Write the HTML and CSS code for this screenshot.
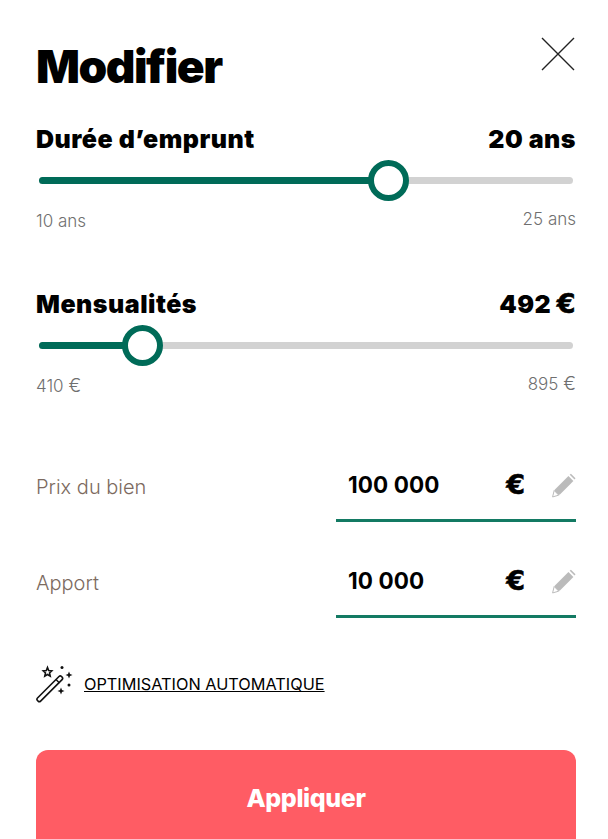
FILE: index.html
```html
<!DOCTYPE html>
<html lang="fr">
<head>
<meta charset="utf-8">
<title>Modifier</title>
<link rel="stylesheet" href="styles.css">
</head>
<body>
<main class="panel">
  <header class="head">
    <h1 class="title">Modifier</h1>
    <svg class="close" width="34" height="34" viewBox="0 0 34 34"><path d="M1 1L33 33M33 1L1 33" stroke="#222" stroke-width="1.4" fill="none"/></svg>
  </header>

  <section class="slider first">
    <div class="row"><span class="label">Durée d’emprunt</span><span class="label">20 ans</span></div>
    <div class="track"><div class="fill fill-a"></div><div class="thumb"></div></div>
    <div class="range"><span class="lo">10 ans</span><span>25 ans</span></div>
  </section>

  <section class="slider second">
    <div class="row"><span class="label">Mensualités</span><span class="label">492 <span class="label-euro">€</span></span></div>
    <div class="track"><div class="fill fill-b"></div><div class="thumb"></div></div>
    <div class="range"><span class="lo">410 <span class="range-euro">€</span></span><span>895 <span class="range-euro">€</span></span></div>
  </section>

  <div class="field field-a">
    <span class="field-label">Prix du bien</span>
    <div class="input">
      <span class="amount">100 000</span><span class="euro">€</span>
      <svg class="pencil" width="25" height="25" viewBox="0 0 25 25"><path d="M2 23.5L4 16.500L17.500 3L22.500 8L9 21.500Z" fill="#bbb"/><path d="M18.800 1.700L20 .6L24.600 5.200L23.600 6.400Z" fill="#bbb"/><path d="M3.200 17.500L7.800 22.200L1.600 24Z" fill="#fff" stroke="#bbb"/></svg>
    </div>
  </div>

  <div class="field field-b">
    <span class="field-label">Apport</span>
    <div class="input">
      <span class="amount">10 000</span><span class="euro">€</span>
      <svg class="pencil" width="25" height="25" viewBox="0 0 25 25"><path d="M2 23.500L4 16.500L17.500 3L22.500 8L9 21.500Z" fill="#bbb"/><path d="M18.800 1.700L20 .6L24.600 5.200L23.600 6.400Z" fill="#bbb"/><path d="M3.200 17.500L7.800 22.200L1.600 24Z" fill="#fff" stroke="#bbb"/></svg>
    </div>
  </div>

  <div class="auto">
    <svg width="38" height="38" viewBox="0 0 38 38"><path d="M2.500 33L24 11.500a1.800 1.800 0 0 1 2.500 0l.6.6a1.800 1.800 0 0 1 0 2.500L5.600 36.100a1.800 1.800 0 0 1-2.500 0l-.6-.6a1.800 1.800 0 0 1 0-2.500Z" fill="#fff" stroke="#111" stroke-width="1.600"/><path d="M21 14.500l3.500 3.500" stroke="#111" stroke-width="1.400"/><path d="M12.500 2.500l1.200 3 3.100.4-2.300 2.100.7 3.100-2.700-1.600-2.700 1.600.7-3.100-2.300-2.100 3.100-.4Z" fill="none" stroke="#111" stroke-width="1.600"/><circle cx="27" cy="2.500" r="1.500" fill="#111"/><path d="M34 6.500l1 2.500 2.500 1-2.500 1-1 2.500-1-2.500-2.500-1 2.500-1Z" fill="#111"/><circle cx="34" cy="20" r="1.500" fill="#111"/><path d="M26 22.500l1 2.500 2.500 1-2.500 1-1 2.500-1-2.500-2.500-1 2.500-1Z" fill="#111"/></svg>
    <a class="auto-link" href="#">OPTIMISATION AUTOMATIQUE</a>
  </div>

  <button class="apply" type="button">Appliquer</button>
</main>
</body>
</html>
```

FILE: styles.css
```css
* { box-sizing: border-box; }
html, body { margin: 0; height: 100%; background: #fff; overflow: hidden; }
body { font-family: "Inter", "Liberation Sans", sans-serif; color: #000; }
.panel { padding: 0 32px 0 36px; }
.head { display: flex; justify-content: space-between; align-items: flex-start; height: 88px; padding-top: 37px; }
.title { margin: 0; font-size: 46px; line-height: 58px; font-weight: 900; letter-spacing: -1.5px; }
.close { margin-right: 1px; }
.slider.first { margin-top: 38px; }
.slider.second { margin-top: 59px; }
.row { display: flex; justify-content: space-between; height: 26px; align-items: center; }
.label { font-size: 25px; line-height: 26px; font-weight: 900; letter-spacing: .5px; }
.label-euro { font-family: "DejaVu Sans", sans-serif; font-size: 27px; font-weight: 700; -webkit-text-stroke: .6px #000; }
.track { position: relative; height: 7px; margin: 25px 3px 0; border-radius: 4px; background: #d2d2d2; }
.fill { height: 7px; border-radius: 4px; background: #006b58; }
.fill-a { width: 65%; }
.fill-b { width: 19%; }
.thumb { position: absolute; top: -17px; width: 41px; height: 41px; border: 6px solid #006b58; border-radius: 50%; background: #fff; }
.fill-a + .thumb { left: 329px; }
.fill-b + .thumb { left: 83px; }
.range { display: flex; justify-content: space-between; margin-top: 24px; font-size: 17px; line-height: 22px; font-weight: 300; color: #6f6f6f; }
.range-euro { font-size: 19px; line-height: 20px; }
.lo { padding-top: 2px; }
.field { display: flex; justify-content: space-between; align-items: flex-start; height: 96px; }
.field-a { margin-top: 59px; }
.field-label { margin-top: 18px; font-size: 20px; line-height: 26px; font-weight: 300; color: #7c6a60; }
.input { display: flex; align-items: center; width: 240px; height: 66px; padding: 16px 0 23px 12px; border-bottom: 3px solid #137a63; }
.amount { width: 159px; font-size: 22.5px; font-weight: 700; letter-spacing: .1px; }
.euro { width: 45px; font-family: "DejaVu Sans", sans-serif; font-size: 27px; font-weight: 700; -webkit-text-stroke: .6px #000; }
.pencil { margin-top: 2px; }
.auto { display: flex; align-items: center; gap: 11px; margin-top: 17px; margin-left: -1px; }
.auto-link { color: #000; font-size: 16.3px; line-height: 22px; }
.apply { display: block; width: 540px; height: 100px; margin-top: 47px; border: 0; border-radius: 12px; background: #ff5c64; color: #fff; font: 800 25px "Inter", sans-serif; padding-bottom: 6px; letter-spacing: -.4px; }
```
